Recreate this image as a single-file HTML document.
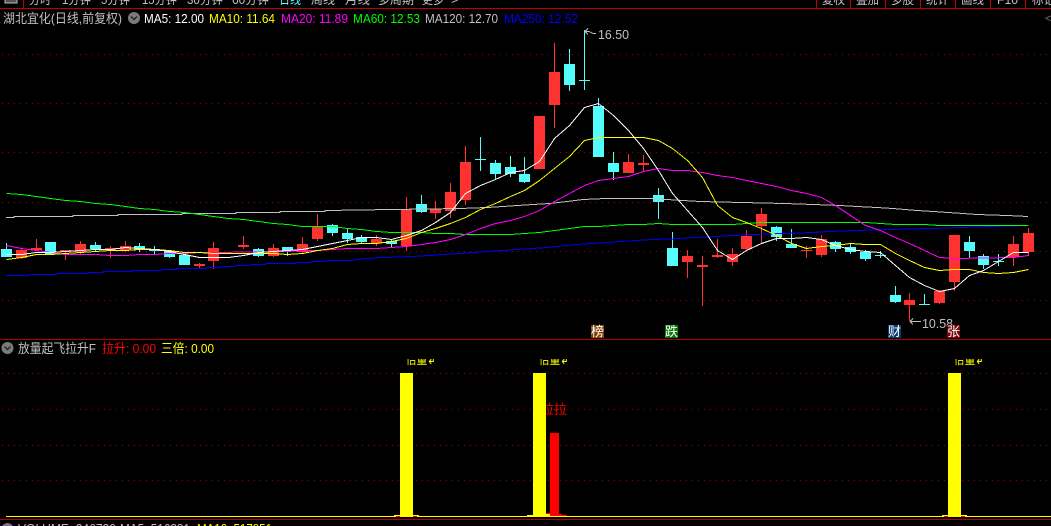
<!DOCTYPE html>
<html><head><meta charset="utf-8">
<style>
html,body{margin:0;padding:0;background:#000;width:1051px;height:526px;overflow:hidden}
svg{display:block;position:absolute;left:0;top:0}
text{font-family:"Liberation Sans","WenQuanYi Zen Hei","Noto Sans CJK SC",sans-serif;font-size:13px;fill:#c0c0c0}
.l{fill:none;stroke-width:1;shape-rendering:crispEdges}
</style></head><body>
<svg width="1051" height="526" viewBox="0 0 1051 526" xmlns="http://www.w3.org/2000/svg">
<defs>
<clipPath id="top"><rect x="0" y="0" width="1051" height="5"/></clipPath>
<clipPath id="ind"><rect x="0" y="359" width="1051" height="8"/></clipPath>
<clipPath id="bot"><rect x="0" y="522" width="1051" height="4"/></clipPath>
</defs>
<rect width="1051" height="526" fill="#000"/>
<!-- toolbar -->
<g clip-path="url(#top)">
<rect x="5" y="-4" width="12" height="7" fill="#555" stroke="#bbb"/>
<text x="29" y="4" textLength="22" lengthAdjust="spacingAndGlyphs">分时</text>
<text x="62" y="4" textLength="29" lengthAdjust="spacingAndGlyphs">1分钟</text>
<text x="101" y="4" textLength="29" lengthAdjust="spacingAndGlyphs">5分钟</text>
<text x="142" y="4" textLength="35" lengthAdjust="spacingAndGlyphs">15分钟</text>
<text x="187" y="4" textLength="36" lengthAdjust="spacingAndGlyphs">30分钟</text>
<text x="232" y="4" textLength="37" lengthAdjust="spacingAndGlyphs">60分钟</text>
<text x="279" y="4" textLength="22" lengthAdjust="spacingAndGlyphs" style="fill:#54fcfc">日线</text>
<text x="311" y="4" textLength="24" lengthAdjust="spacingAndGlyphs">周线</text>
<text x="345" y="4" textLength="25" lengthAdjust="spacingAndGlyphs">月线</text>
<text x="378" y="4" textLength="36" lengthAdjust="spacingAndGlyphs">多周期</text>
<text x="422" y="4" textLength="22" lengthAdjust="spacingAndGlyphs">更多</text>
<text x="451" y="4">&gt;</text>
<text x="822" y="4" textLength="23" lengthAdjust="spacingAndGlyphs">复权</text>
<text x="856" y="4" textLength="23" lengthAdjust="spacingAndGlyphs">叠加</text>
<text x="891" y="4" textLength="23" lengthAdjust="spacingAndGlyphs">多股</text>
<text x="926" y="4" textLength="23" lengthAdjust="spacingAndGlyphs">统计</text>
<text x="961" y="4" textLength="23" lengthAdjust="spacingAndGlyphs">画线</text>
<text x="997" y="4" textLength="21" lengthAdjust="spacingAndGlyphs">F10</text>
<text x="1032" y="4" textLength="23" lengthAdjust="spacingAndGlyphs">标记</text>
</g>
<g shape-rendering="crispEdges" fill="#c00000">
<rect x="0" y="8" width="1051" height="1"/>
<rect x="23" y="0" width="1" height="8"/>
<rect x="816" y="0" width="1" height="8"/><rect x="850" y="0" width="1" height="8"/><rect x="885" y="0" width="1" height="8"/><rect x="920" y="0" width="1" height="8"/><rect x="955" y="0" width="1" height="8"/><rect x="990" y="0" width="1" height="8"/><rect x="1025" y="0" width="1" height="8"/>
<rect x="0" y="339" width="1051" height="1" fill="#b00000"/>
<rect x="0" y="519" width="1051" height="1" fill="#b00000"/>
</g>
<!-- grid -->
<g stroke="#a00000" stroke-width="1" stroke-dasharray="1 5" shape-rendering="crispEdges">
<path d="M2 54.5H1051M2 103.5H1051M2 152.5H1051M2 202.5H1051M2 251.5H1051M2 300.5H1051"/>
<path d="M2 373.5H1051M2 409.5H1051M2 445.5H1051M2 480.5H1051"/>
</g>
<!-- header -->
<text x="3" y="23" textLength="119" lengthAdjust="spacingAndGlyphs">湖北宜化(日线,前复权)</text>
<circle cx="134" cy="18" r="6" fill="#7a7a7a"/><path d="M131 16.5l3 3 3-3" fill="none" stroke="#222" stroke-width="1.4"/>
<text x="144" y="23" textLength="60" lengthAdjust="spacingAndGlyphs" style="fill:#fff">MA5: 12.00</text>
<text x="209" y="23" textLength="66" lengthAdjust="spacingAndGlyphs" style="fill:#ffff00">MA10: 11.64</text>
<text x="281" y="23" textLength="67" lengthAdjust="spacingAndGlyphs" style="fill:#ff00ff">MA20: 11.89</text>
<text x="353" y="23" textLength="67" lengthAdjust="spacingAndGlyphs" style="fill:#00ff00">MA60: 12.53</text>
<text x="425" y="23" textLength="73" lengthAdjust="spacingAndGlyphs" style="fill:#c0c0c0">MA120: 12.70</text>
<text x="504" y="23" textLength="74" lengthAdjust="spacingAndGlyphs" style="fill:#0000ff">MA250: 12.52</text>
<text x="1045" y="22" style="fill:#777;font-size:11px">&lt;</text>
<!-- candle wicks -->
<g class="l" stroke="#ff3232">
<path class="l" d="M21.5 249V259M36.5 239V250M65.5 250V260M80.5 241V254M110.5 246V258M125.5 241V252M199.5 263V268M213.5 242V269M243.5 236V249M273.5 244V257M302.5 237V254M317.5 214V241M376.5 235V246M406.5 197V251M435.5 201V219M450.5 183V218M465.5 146V205M554.5 43V128M628.5 154V173M643.5 155V171M687.5 250V278M702.5 256V306M717.5 239V258M732.5 248V266M746.5 230V250M761.5 208V243M806.5 246V258M821.5 235V257M909.5 293V321M939.5 290V304M954.5 235V291M1013.5 236V266M1028.5 228V256"/>
</g>
<g class="l" stroke="#54fcfc">
<path class="l" d="M6.5 243V257M50.5 242V254M95.5 242V251M139.5 243V252M154.5 246V254M169.5 251V258M184.5 254V265M258.5 248V257M287.5 247V256M332.5 224V236M347.5 229V243M361.5 235V244M391.5 239V247M421.5 195V213M480.5 137V171M495.5 160V180M510.5 156V177M524.5 157V183M569.5 49V91M584.5 30V90M598.5 98V157M613.5 152V180M658.5 188V219M672.5 232V266M776.5 226V241M791.5 229V248M835.5 241V252M850.5 244V254M865.5 250V261M880.5 251V258M895.5 286V303M924.5 294V305M969.5 236V258M983.5 254V269M998.5 254V266"/>
</g>
<!-- candle bodies -->
<path shape-rendering="crispEdges" fill="#ff3232" d="M16 250h11v8h-11zM31 248h11v2h-11zM60 250h11v2h-11zM75 244h11v8h-11zM105 248h11v2h-11zM120 246h11v4h-11zM194 264h11v2h-11zM208 248h11v13h-11zM238 245h11v2h-11zM268 248h11v8h-11zM297 244h11v8h-11zM312 227h11v12h-11zM371 239h11v4h-11zM401 209h11v37h-11zM430 209h11v4h-11zM445 192h11v19h-11zM460 162h11v38h-11zM534 116h11v53h-11zM549 72h11v33h-11zM623 162h11v11h-11zM638 163h11v2h-11zM682 256h11v6h-11zM697 265h11v2h-11zM712 255h11v2h-11zM727 254h11v8h-11zM741 236h11v13h-11zM756 214h11v12h-11zM801 250h11v1h-11zM816 239h11v16h-11zM904 300h11v5h-11zM934 291h11v12h-11zM949 235h11v47h-11zM1008 244h11v13h-11zM1023 233h11v19h-11z"/>
<path shape-rendering="crispEdges" fill="#54fcfc" d="M1 249h11v8h-11zM45 242h11v12h-11zM90 245h11v4h-11zM134 246h11v4h-11zM149 249h11v2h-11zM164 251h11v6h-11zM179 255h11v10h-11zM253 249h11v7h-11zM282 247h11v4h-11zM327 225h11v8h-11zM342 233h11v6h-11zM356 237h11v5h-11zM386 241h11v3h-11zM416 204h11v8h-11zM475 159h11v1h-11zM490 163h11v11h-11zM505 167h11v7h-11zM519 174h11v8h-11zM564 64h11v21h-11zM579 80h11v1h-11zM593 106h11v51h-11zM608 163h11v9h-11zM653 195h11v7h-11zM667 248h11v18h-11zM771 227h11v10h-11zM786 244h11v4h-11zM830 242h11v7h-11zM845 247h11v5h-11zM860 252h11v7h-11zM875 255h11v1h-11zM890 295h11v7h-11zM919 304h11v1h-11zM964 242h11v9h-11zM978 256h11v9h-11zM993 261h11v1h-11z"/>
<!-- MA120 gray -->
<polyline class="l" stroke="#c0c0c0" points="6,217.5 14,217.5 14,216.5 73,216.5 73,215.5 118,215.5 118,214.5 182,214.5 182,213.5 236,213.5 236,212.5 280,212.5 280,211.5 325,211.5 325,210.5 460,208.5 487,207.5 503,206.5 517,205.5 533,204.5 550,203.5 567,201.5 583,199.5 606,198.5 650,198.5 667,199.5 700,201.5 784,203.5 813,204.5 840,205.5 857,206.5 877,207.5 893,208.5 917,210.5 933,211.5 963,213.5 977,214.5 1007,215.5 1028,216.5"/>
<!-- MA250 blue -->
<polyline class="l" stroke="#0000ff" points="6,275.5 29,275.5 29,274.5 58,274.5 58,273.5 88,273.5 88,272.5 103,272.5 103,271.5 132,271.5 132,270.5 162,270.5 162,269.5 177,269.5 177,268.5 206,268.5 206,267.5 221,267.5 221,266.5 236,266.5 236,265.5 251,265.5 251,264.5 266,264.5 266,263.5 295,263.5 295,262.5 310,262.5 310,261.5 325,261.5 325,260.5 350,260.5 367,258.5 383,257.5 413,256.5 428,255.5 443,254.5 473,252.5 488,251.5 503,250.5 517,249.5 533,248.5 547,247.5 558,246.5 567,245.5 577,244.5 592,243.5 607,242.5 622,241.5 637,240.5 652,239.5 680,238.5 695,237.5 715,236.5 733,235.5 753,234.5 783,233.5 813,232.5 828,231.5 857,230.5 887,229.5 932,228.5 990,226.5 1028,225.5"/>
<!-- MA60 green -->
<polyline class="l" stroke="#00ff00" points="6.5,193.5 21.5,194.5 36.5,196.5 50.5,198.5 65.5,200.5 80.5,201.5 95.5,203.5 110.5,204.5 125.5,206.5 139.5,208.5 154.5,209.5 169.5,211.5 184.5,212.5 199.5,214.5 213.5,216.5 228.5,218.5 243.5,219.5 258.5,221.5 273.5,223.5 287.5,224.5 302.5,226.5 317.5,226.5 332.5,226.5 347.5,228.5 361.5,229.5 376.5,231.5 391.5,232.5 406.5,232.5 421.5,232.5 435.5,233.5 450.5,233.5 465.5,234.5 480.5,234.5 495.5,234.5 510.5,234.5 524.5,233.5 539.5,232.5 554.5,230.5 569.5,228.5 584.5,226.5 598.5,226.5 613.5,225.5 628.5,224.5 643.5,224.5 658.5,223.5 672.5,224.5 687.5,224.5 702.5,224.5 717.5,224.5 732.5,224.5 746.5,223.5 761.5,222.5 865.5,222.5 880.5,223.5 895.5,224.5 909.5,224.5 924.5,224.5 939.5,225.5 1028.5,225.5"/>
<!-- MA20 magenta -->
<polyline class="l" stroke="#ff00ff" points="6.5,245.5 21.5,248.5 36.5,250.5 50.5,252.5 65.5,254.5 80.5,254.5 95.5,254.5 110.5,255.5 125.5,255.5 139.5,254.5 154.5,254.5 169.5,253.5 184.5,253.5 199.5,252.5 213.5,252.5 287.5,251.5 302.5,250.5 317.5,250.5 332.5,249.5 347.5,248.5 361.5,248.5 376.5,248.5 391.5,247.5 406.5,246.5 421.5,244.5 435.5,242.5 450.5,239.5 465.5,234.5 480.5,228.5 495.5,223.5 510.5,220.5 524.5,216.5 539.5,210.5 554.5,201.5 569.5,193.5 584.5,185.5 598.5,180.5 613.5,178.5 628.5,176.5 643.5,171.5 658.5,168.5 672.5,170.5 687.5,170.5 702.5,172.5 717.5,175.5 732.5,177.5 746.5,180.5 761.5,183.5 776.5,186.5 791.5,190.5 806.5,193.5 821.5,197.5 835.5,205.5 850.5,215.5 865.5,225.5 880.5,230.5 895.5,237.5 909.5,243.5 924.5,250.5 939.5,257.5 954.5,258.5 1013.5,257.5 1028.5,255.5"/>
<!-- MA10 yellow -->
<polyline class="l" stroke="#ffff00" points="6.5,259.5 21.5,257.5 36.5,254.5 50.5,254.5 65.5,253.5 80.5,252.5 95.5,251.5 110.5,250.5 125.5,250.5 139.5,249.5 154.5,249.5 169.5,250.5 184.5,252.5 199.5,252.5 213.5,253.5 273.5,253.5 287.5,254.5 302.5,253.5 317.5,250.5 332.5,248.5 347.5,244.5 361.5,243.5 376.5,243.5 391.5,241.5 406.5,238.5 421.5,232.5 435.5,228.5 450.5,223.5 465.5,217.5 480.5,209.5 495.5,203.5 510.5,196.5 524.5,190.5 539.5,180.5 554.5,168.5 569.5,156.5 584.5,140.5 598.5,137.5 643.5,137.5 658.5,140.5 672.5,148.5 687.5,160.5 702.5,177.5 717.5,205.5 732.5,217.5 746.5,222.5 761.5,228.5 776.5,235.5 791.5,243.5 806.5,248.5 821.5,246.5 835.5,245.5 850.5,243.5 865.5,244.5 880.5,244.5 895.5,253.5 909.5,260.5 924.5,267.5 939.5,270.5 954.5,269.5 969.5,269.5 983.5,272.5 998.5,273.5 1013.5,272.5 1028.5,269.5"/>
<!-- MA5 white -->
<polyline class="l" stroke="#ffffff" points="6.5,254.5 21.5,254.5 36.5,252.5 50.5,252.5 65.5,251.5 80.5,250.5 95.5,249.5 110.5,249.5 125.5,247.5 139.5,248.5 154.5,249.5 169.5,251.5 184.5,254.5 199.5,257.5 213.5,257.5 228.5,257.5 243.5,255.5 258.5,252.5 273.5,251.5 287.5,250.5 302.5,249.5 317.5,246.5 332.5,243.5 347.5,240.5 361.5,237.5 376.5,237.5 391.5,239.5 406.5,235.5 421.5,230.5 435.5,222.5 450.5,212.5 465.5,193.5 480.5,185.5 495.5,179.5 510.5,172.5 524.5,170.5 539.5,161.5 554.5,138.5 569.5,125.5 584.5,107.5 598.5,103.5 613.5,115.5 628.5,130.5 643.5,148.5 658.5,170.5 672.5,193.5 687.5,210.5 702.5,227.5 717.5,250.5 732.5,259.5 746.5,250.5 761.5,243.5 776.5,238.5 791.5,238.5 806.5,237.5 821.5,239.5 835.5,245.5 850.5,249.5 865.5,251.5 880.5,252.5 895.5,265.5 909.5,277.5 924.5,285.5 939.5,291.5 954.5,288.5 969.5,275.5 983.5,270.5 998.5,261.5 1013.5,252.5 1028.5,252.5"/>
<!-- price labels -->
<path class="l" stroke="#c0c0c0" d="M585 31.5h4M585 31.5l3-3M585 31.5l3 3M589 31.5l4 2h3"/>
<text x="598" y="39" textLength="31" lengthAdjust="spacingAndGlyphs">16.50</text>
<path class="l" stroke="#c0c0c0" d="M910 321.5h11M910 321.5l3-3M910 321.5l3 3"/>
<text x="922" y="328" textLength="31" lengthAdjust="spacingAndGlyphs">10.58</text>
<!-- badges -->
<g shape-rendering="crispEdges">
<rect x="591" y="325" width="13" height="13" fill="#7f4000"/>
<rect x="665" y="325" width="13" height="13" fill="#087808"/>
<rect x="888" y="325" width="13" height="13" fill="#0a3c70"/>
<rect x="947" y="325" width="13" height="13" fill="#780808"/>
</g>
<g>
<text x="591" y="336" style="font-size:13px;fill:#fff">榜</text>
<text x="665" y="336" style="font-size:13px;fill:#fff">跌</text>
<text x="888" y="336" style="font-size:13px;fill:#fff">财</text>
<text x="947" y="336" style="font-size:13px;fill:#fff">张</text>
</g>
<!-- indicator header -->
<circle cx="7.5" cy="348" r="6" fill="#7a7a7a"/><path d="M4.5 346.5l3 3 3-3" fill="none" stroke="#222" stroke-width="1.4"/>
<text x="18" y="353" textLength="78" lengthAdjust="spacingAndGlyphs">放量起飞拉升F</text>
<text x="102" y="353" textLength="54" lengthAdjust="spacingAndGlyphs" style="fill:#ff0000">拉升: 0.00</text>
<text x="161" y="353" textLength="53" lengthAdjust="spacingAndGlyphs" style="fill:#ffff00">三倍: 0.00</text>
<!-- indicator -->
<g clip-path="url(#ind)">
<text x="406" y="364" textLength="30" lengthAdjust="spacingAndGlyphs" style="fill:#ffff00">倍量↲</text>
<text x="539" y="364" textLength="30" lengthAdjust="spacingAndGlyphs" style="fill:#ffff00">倍量↲</text>
<text x="954" y="364" textLength="30" lengthAdjust="spacingAndGlyphs" style="fill:#ffff00">倍量↲</text>
</g>
<text x="541" y="414" textLength="26" lengthAdjust="spacingAndGlyphs" style="fill:#ff0000">拉拉</text>
<g shape-rendering="crispEdges">
<rect x="550" y="433" width="9" height="83" fill="#ff0000"/>
<rect x="400" y="373" width="13" height="144" fill="#ffff00"/>
<rect x="533" y="373" width="13" height="144" fill="#ffff00"/>
<rect x="948" y="373" width="13" height="144" fill="#ffff00"/>
<rect x="6" y="516" width="1045" height="1" fill="#ffff00"/>
<path fill="#ffff00" d="M394 515h6v1h-6zM413 515h6v1h-6zM527 515h6v1h-6zM546 514h4v2h-4zM942 515h6v1h-6zM961 515h6v1h-6z"/>
<path fill="#ff0000" d="M559 514h3v2h-3zM562 515h5v1h-5zM546 513h4v1h-4zM396 516h4v1h-4zM413 516h4v1h-4zM944 516h4v1h-4zM961 516h4v1h-4z"/>
</g>
<!-- bottom -->
<g clip-path="url(#bot)">
<circle cx="7.5" cy="529" r="6" fill="#7a7a7a"/>
<text x="18" y="533" textLength="98" lengthAdjust="spacingAndGlyphs">VOLUME: 246720</text>
<text x="120" y="533" textLength="70" lengthAdjust="spacingAndGlyphs">MA5: 516281</text>
<text x="197" y="533" textLength="75" lengthAdjust="spacingAndGlyphs" style="fill:#ffff00">MA10: 517951</text>
</g>
</svg>
</body></html>
